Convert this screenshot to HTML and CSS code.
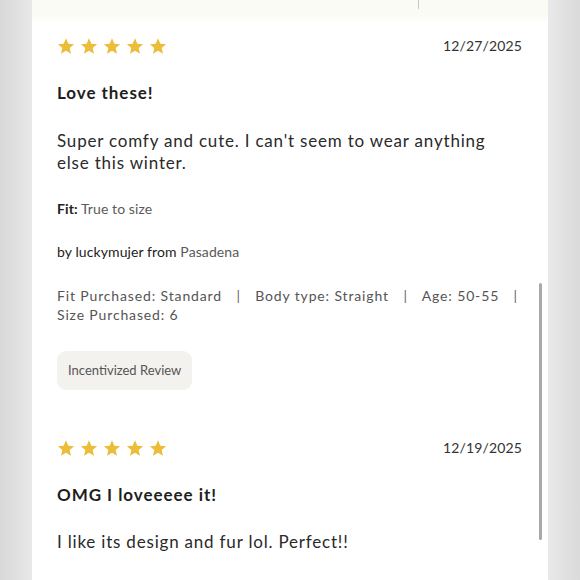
FILE: index.html
```html
<!DOCTYPE html>
<html>
<head>
<meta charset="utf-8">
<link rel="stylesheet" href="styles.css">
</head>
<body>
<div class="page">
  <div class="side side-left"></div>
  <div class="card">
    <div class="topstrip"><span class="tick"></span></div>
    <div class="review">
      <div class="head">
        <div class="stars">
          <svg viewBox="0 0 24 24"><path d="M12 1.8l3.1 7.2 7.7.6-5.9 5 1.8 7.6L12 18.2l-6.7 4 1.8-7.6-5.9-5 7.7-.6z"/></svg>
          <svg viewBox="0 0 24 24"><path d="M12 1.8l3.1 7.2 7.7.6-5.9 5 1.8 7.6L12 18.2l-6.7 4 1.8-7.6-5.9-5 7.7-.6z"/></svg>
          <svg viewBox="0 0 24 24"><path d="M12 1.8l3.1 7.2 7.7.6-5.9 5 1.8 7.6L12 18.2l-6.7 4 1.8-7.6-5.9-5 7.7-.6z"/></svg>
          <svg viewBox="0 0 24 24"><path d="M12 1.8l3.1 7.2 7.7.6-5.9 5 1.8 7.6L12 18.2l-6.7 4 1.8-7.6-5.9-5 7.7-.6z"/></svg>
          <svg viewBox="0 0 24 24"><path d="M12 1.8l3.1 7.2 7.7.6-5.9 5 1.8 7.6L12 18.2l-6.7 4 1.8-7.6-5.9-5 7.7-.6z"/></svg>
        </div>
        <div class="date">12/27/2025</div>
      </div>
      <div class="title">Love these!</div>
      <p class="body">Super comfy and cute. I can't seem to wear anything else this winter.</p>
      <div class="fit"><span class="lbl">Fit:</span> <span class="val">True to size</span></div>
      <div class="by"><span class="lbl">by luckymujer from</span> <span class="val">Pasadena</span></div>
      <div class="meta">Fit Purchased: Standard <span class="sep">|</span> Body type: Straight <span class="sep">|</span> Age: 50-55 <span class="sep">|</span> Size Purchased: 6</div>
      <div class="badge">Incentivized Review</div>
    </div>
    <div class="review second">
      <div class="head">
        <div class="stars">
          <svg viewBox="0 0 24 24"><path d="M12 1.8l3.1 7.2 7.7.6-5.9 5 1.8 7.6L12 18.2l-6.7 4 1.8-7.6-5.9-5 7.7-.6z"/></svg>
          <svg viewBox="0 0 24 24"><path d="M12 1.8l3.1 7.2 7.7.6-5.9 5 1.8 7.6L12 18.2l-6.7 4 1.8-7.6-5.9-5 7.7-.6z"/></svg>
          <svg viewBox="0 0 24 24"><path d="M12 1.8l3.1 7.2 7.7.6-5.9 5 1.8 7.6L12 18.2l-6.7 4 1.8-7.6-5.9-5 7.7-.6z"/></svg>
          <svg viewBox="0 0 24 24"><path d="M12 1.8l3.1 7.2 7.7.6-5.9 5 1.8 7.6L12 18.2l-6.7 4 1.8-7.6-5.9-5 7.7-.6z"/></svg>
          <svg viewBox="0 0 24 24"><path d="M12 1.8l3.1 7.2 7.7.6-5.9 5 1.8 7.6L12 18.2l-6.7 4 1.8-7.6-5.9-5 7.7-.6z"/></svg>
        </div>
        <div class="date">12/19/2025</div>
      </div>
      <div class="title">OMG I loveeeee it!</div>
      <p class="body">I like its design and fur lol. Perfect!!</p>
    </div>
    <div class="scrollbar"></div>
  </div>
  <div class="side side-right"></div>
</div>
</body>
</html>
```

FILE: styles.css
```css
html, body {
  margin: 0;
  padding: 0;
  width: 580px;
  height: 580px;
  overflow: hidden;
}
body {
  font-family: "Lato", "Open Sans", sans-serif;
  color: #222;
}
.page {
  display: flex;
  height: 580px;
}
.side {
  width: 32px;
  flex: none;
}
.side-left {
  background: linear-gradient(to right, #d8d8d8, #e8e8e8);
}
.side-right {
  background: linear-gradient(to right, #e9e9e9, #dadada);
}
.card {
  position: relative;
  flex: 1;
  background: #fff;
  overflow: hidden;
}
.topstrip {
  height: 22px;
  background: linear-gradient(to bottom, #fbfbf6 70%, #fdfdfb);
  padding-left: 386px;
}
.tick {
  display: block;
  width: 1px;
  height: 9px;
  background: #c8c8c8;
}
.review {
  padding: 15px 26px 0 25px;
}
.head {
  display: flex;
  justify-content: space-between;
  align-items: center;
  height: 18px;
}
.stars {
  display: flex;
  gap: 5px;
}
.stars svg {
  width: 18px;
  height: 18px;
  fill: #ebbd38;
}
.date {
  font-size: 14px;
  letter-spacing: 0.15px;
  color: #333;
  margin-top: -2px;
}
.title {
  margin-top: 28px;
  font-size: 17px;
  font-weight: 700;
  letter-spacing: 0.95px;
  color: #1e1e1e;
  line-height: 20px;
}
.body {
  margin: 27px 0 0;
  font-size: 17px;
  line-height: 22px;
  letter-spacing: 0.8px;
  color: #2a2a2a;
  width: 450px;
}
.fit {
  margin-top: 26px;
  font-size: 14px;
  letter-spacing: 0.1px;
  line-height: 18px;
}
.by {
  margin-top: 25px;
  font-size: 14px;
  letter-spacing: 0.1px;
  line-height: 18px;
}
.lbl {
  color: #222;
}
.fit .lbl {
  font-weight: 700;
}
.val {
  color: #5a5a5a;
}
.meta {
  margin-top: 25px;
  font-size: 14px;
  line-height: 19px;
  letter-spacing: 0.86px;
  color: #555;
  width: 480px;
}
.sep {
  margin: 0 10px;
  color: #666;
}
.badge {
  display: inline-block;
  margin-top: 27px;
  padding: 0 11px;
  height: 39px;
  line-height: 39px;
  border-radius: 9px;
  background: #f4f2ee;
  font-size: 13px;
  color: #555;
}
.second {
  padding-top: 49px;
}
.second .title {
  margin-top: 28px;
}
.second .body {
  margin-top: 26px;
}
.scrollbar {
  position: absolute;
  left: 507px;
  top: 283px;
  width: 3px;
  height: 257px;
  border-radius: 2px;
  background: #a9a9a9;
}
```
